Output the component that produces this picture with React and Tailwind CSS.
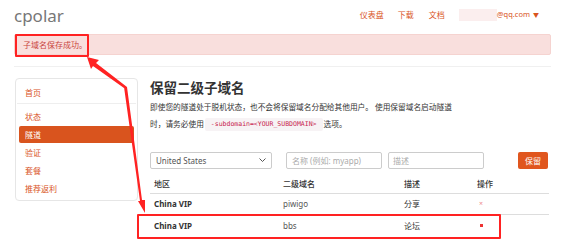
export default function App() {
  const font = { fontFamily: '"Noto Sans", "Noto Sans CJK SC", sans-serif' };
  return (
    <div className="relative w-[565px] h-[243px] overflow-hidden bg-white text-[#333]" style={font}>
      {/* header */}
      <div className="flex items-center h-[30px] pl-[14px] pr-[26px]">
        <div className="text-[17px] text-[#777] leading-none pt-[1px]">cpolar</div>
        <div className="flex-1" />
        <div className="flex items-center text-[8px] text-[#d9541e]">
          <span>仪表盘</span>
          <span className="ml-[14px]">下载</span>
          <span className="ml-[15px]">文档</span>
          <span className="ml-[14px] flex items-center">
            <span className="inline-block w-[38px] h-[12px] bg-[#fbeeee]" />
            <span className="text-[7.5px]">@qq.com</span>
            <span className="ml-[3px] text-[6px]">▼</span>
          </span>
        </div>
      </div>
      {/* alert */}
      <div className="mx-[14px] mt-[4px] h-[21px] flex items-center bg-[#f9dfdd] border border-[#f5d3d0] rounded-[2px] px-[8px]">
        <span className="text-[8px] text-[#c9463d]">子域名保存成功。</span>
      </div>
      <div className="mx-[14px] mt-[11px] border-t border-[#f0f0f0]" />
      {/* body */}
      <div className="flex mt-[11px] pl-[15px]">
        <div className="w-[123px] h-[123px] border border-[#e6e6e6] rounded-[4px] pt-[4px] text-[8px] text-[#d9541e]">
          <div className="h-[20px] flex items-center pl-[9px]">首页</div>
          <div className="border-t border-[#eee] mx-[1px] mb-[4px]" />
          <div className="h-[18px] flex items-center pl-[9px]">状态</div>
          <div className="h-[17px] mx-[3px] flex items-center pl-[6px] bg-[#d9541e] text-white rounded-[2px]">隧道</div>
          <div className="h-[18px] flex items-center pl-[9px] mt-[1px]">验证</div>
          <div className="h-[18px] flex items-center pl-[9px]">套餐</div>
          <div className="h-[18px] flex items-center pl-[9px]">推荐返利</div>
        </div>
        <div className="ml-[12px] w-[399px]">
          <div className="text-[13.5px] font-bold leading-[20px] text-[#333]">保留二级子域名</div>
          <div className="mt-[1px] text-[7.7px] leading-[17px] text-[#333]">
            <div>即使您的隧道处于脱机状态，也不会将保留域名分配给其他用户。 使用保留域名启动隧道</div>
            <div className="flex items-center">
              时，请务必使用
              <span className="mx-[1px] px-[6px] bg-[#f7f3f5] text-[#c7254e] text-[6.5px] rounded-[2px] leading-[13px]" style={{ fontFamily: '"DejaVu Sans Mono", monospace' }}>-subdomain=&lt;YOUR_SUBDOMAIN&gt;</span>
              选项。
            </div>
          </div>
          {/* form */}
          <div className="flex items-center mt-[19px] h-[17px]">
            <div className="w-[122px] h-[17px] border border-[#ccc] rounded-[2px] flex items-center justify-between px-[5px] text-[8px] text-[#555]">
              <span>United States</span>
              <svg width="7" height="5" viewBox="0 0 7 5"><path d="M0.5 0.5 L3.5 3.5 L6.5 0.5" fill="none" stroke="#555" strokeWidth="1" /></svg>
            </div>
            <div className="ml-[14px] w-[96px] h-[17px] border border-[#ccc] rounded-[2px] flex items-center px-[5px] text-[8px] text-[#aaa]">名称 (例如: myapp)</div>
            <div className="ml-[6px] w-[96px] h-[17px] border border-[#ccc] rounded-[2px] flex items-center px-[4px] text-[8px] text-[#aaa]">描述</div>
            <div className="ml-[34px] w-[30px] h-[17px] bg-[#e0561e] rounded-[2px] flex items-center justify-center text-[8px] text-white">保留</div>
          </div>
          {/* table */}
          <div className="mt-[5px] text-[8px]">
            <div className="flex items-center h-[20px] border-b border-[#ddd] font-medium">
              <div className="w-[133px] pl-[4px]">地区</div>
              <div className="w-[121px]">二级域名</div>
              <div className="w-[73px]">描述</div>
              <div>操作</div>
            </div>
            <div className="flex items-center h-[21px] border-b border-[#ddd]">
              <div className="w-[133px] pl-[4px] font-bold">China VIP</div>
              <div className="w-[121px] text-[#555]">piwigo</div>
              <div className="w-[73px]">分享</div>
              <div className="pl-[2px] text-[#e88] text-[7px]">×</div>
            </div>
            <div className="flex items-center h-[21px]">
              <div className="w-[133px] pl-[4px] font-bold">China VIP</div>
              <div className="w-[121px] text-[#555]">bbs</div>
              <div className="w-[73px]">论坛</div>
              <div className="pl-[3px]"><span className="block w-[3px] h-[3px] bg-[#e33]" /></div>
            </div>
          </div>
        </div>
      </div>
      {/* annotations */}
      <div className="absolute left-[15px] top-[34px] w-[74px] h-[23px] border-2 border-[#f22] rounded-[1px]" />
      <div className="absolute left-[137px] top-[214px] w-[364px] h-[25px] border-2 border-[#f22] rounded-[1px]" />
      <svg className="absolute left-0 top-0" width="565" height="243" viewBox="0 0 565 243">
        <polygon points="87,57 99,60 96,63 127,87 124,88 93,66 91,69" fill="#f22" />
        <polygon points="124,87 127,87 142,200 145,200 145,213 138,201 140,201" fill="#f22" />
      </svg>
    </div>
  );
}
